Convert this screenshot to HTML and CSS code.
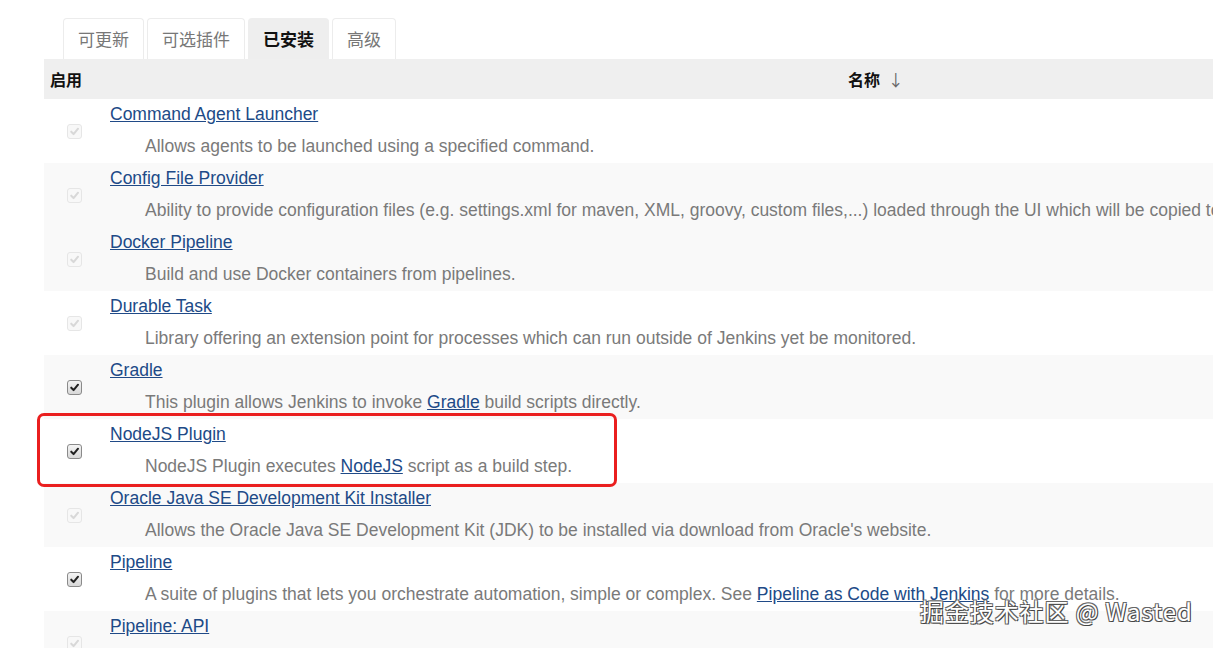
FILE: index.html
```html
<!DOCTYPE html>
<html lang="zh">
<head>
<meta charset="utf-8">
<title>插件管理</title>
<link rel="stylesheet" href="styles.css">
</head>
<body>
<div class="page">
  <div class="tabs">
    <div class="tab">可更新</div>
    <div class="tab">可选插件</div>
    <div class="tab active">已安装</div>
    <div class="tab">高级</div>
  </div>
  <div class="table">
    <div class="thead">
      <div class="th-enable">启用</div>
      <div class="th-name">名称 <span class="arrow">↓</span></div>
    </div>

    <div class="row">
      <div class="cb-cell"><span class="cb disabled"><svg viewBox="0 0 14 14"><path d="M3.5 7.2 L6 9.8 L10.8 4"/></svg></span></div>
      <div class="info">
        <a class="title" href="#">Command Agent Launcher</a>
        <div class="desc">Allows agents to be launched using a specified command.</div>
      </div>
    </div>

    <div class="row shade">
      <div class="cb-cell"><span class="cb disabled"><svg viewBox="0 0 14 14"><path d="M3.5 7.2 L6 9.8 L10.8 4"/></svg></span></div>
      <div class="info">
        <a class="title" href="#">Config File Provider</a>
        <div class="desc">Ability to provide configuration files (e.g. settings.xml for maven, XML, groovy, custom files,...) loaded through the UI which will be copied to the job workspace.</div>
      </div>
    </div>

    <div class="row shade">
      <div class="cb-cell"><span class="cb disabled"><svg viewBox="0 0 14 14"><path d="M3.5 7.2 L6 9.8 L10.8 4"/></svg></span></div>
      <div class="info">
        <a class="title" href="#">Docker Pipeline</a>
        <div class="desc">Build and use Docker containers from pipelines.</div>
      </div>
    </div>

    <div class="row">
      <div class="cb-cell"><span class="cb disabled"><svg viewBox="0 0 14 14"><path d="M3.5 7.2 L6 9.8 L10.8 4"/></svg></span></div>
      <div class="info">
        <a class="title" href="#">Durable Task</a>
        <div class="desc">Library offering an extension point for processes which can run outside of Jenkins yet be monitored.</div>
      </div>
    </div>

    <div class="row shade">
      <div class="cb-cell"><span class="cb"><svg viewBox="0 0 14 14"><path d="M3.5 7.2 L6 9.8 L10.8 4"/></svg></span></div>
      <div class="info">
        <a class="title" href="#">Gradle</a>
        <div class="desc">This plugin allows Jenkins to invoke <a href="#">Gradle</a> build scripts directly.</div>
      </div>
    </div>

    <div class="row">
      <div class="cb-cell"><span class="cb"><svg viewBox="0 0 14 14"><path d="M3.5 7.2 L6 9.8 L10.8 4"/></svg></span></div>
      <div class="info">
        <a class="title" href="#">NodeJS Plugin</a>
        <div class="desc">NodeJS Plugin executes <a href="#">NodeJS</a> script as a build step.</div>
      </div>
    </div>

    <div class="row shade">
      <div class="cb-cell"><span class="cb disabled"><svg viewBox="0 0 14 14"><path d="M3.5 7.2 L6 9.8 L10.8 4"/></svg></span></div>
      <div class="info">
        <a class="title" href="#">Oracle Java SE Development Kit Installer</a>
        <div class="desc">Allows the Oracle Java SE Development Kit (JDK) to be installed via download from Oracle's website.</div>
      </div>
    </div>

    <div class="row">
      <div class="cb-cell"><span class="cb"><svg viewBox="0 0 14 14"><path d="M3.5 7.2 L6 9.8 L10.8 4"/></svg></span></div>
      <div class="info">
        <a class="title" href="#">Pipeline</a>
        <div class="desc">A suite of plugins that lets you orchestrate automation, simple or complex. See <a href="#">Pipeline as Code with Jenkins</a> for more details.</div>
      </div>
    </div>

    <div class="row shade">
      <div class="cb-cell"><span class="cb disabled"><svg viewBox="0 0 14 14"><path d="M3.5 7.2 L6 9.8 L10.8 4"/></svg></span></div>
      <div class="info">
        <a class="title" href="#">Pipeline: API</a>
        <div class="desc">Plugin that defines Pipeline API.</div>
      </div>
    </div>
  </div>

  <div class="highlight"></div>
  <div class="watermark">掘金技术社区 @ Wasted</div>
</div>
</body>
</html>
```

FILE: styles.css
```css
* { box-sizing: border-box; }

html, body {
  margin: 0;
  padding: 0;
  background: #fff;
}

body {
  width: 1213px;
  height: 648px;
  overflow: hidden;
  font-family: "Liberation Sans", Arial, "Noto Sans CJK SC", sans-serif;
  font-size: 17.5px;
}

.page {
  position: relative;
  width: 1213px;
  height: 648px;
  padding: 18px 0 0 44px;
}

.tabs {
  display: flex;
  gap: 3px;
  margin-left: 19px;
  height: 41px;
}

.tab {
  padding: 0 14px;
  height: 41px;
  line-height: 40px;
  border: 1px solid #ececec;
  border-bottom: none;
  border-radius: 4px 4px 0 0;
  font-family: "Noto Sans CJK SC", sans-serif;
  font-size: 17px;
  color: #777;
  background: #fff;
}

.tab.active {
  background: #eeeeee;
  border-color: #eeeeee;
  color: #111;
  font-weight: bold;
}

.table {
  width: 1169px;
}

.thead {
  display: flex;
  align-items: center;
  height: 40px;
  background: #efefef;
  font-family: "Noto Sans CJK SC", sans-serif;
  font-size: 16px;
  font-weight: bold;
  color: #111;
}

.th-enable {
  width: 66px;
  padding-left: 6px;
}

.th-name {
  padding-left: 738px;
}

.th-name .arrow {
  font-weight: normal;
  color: #666;
  margin-left: 4px;
}

.row {
  display: flex;
  height: 64px;
  background: #fff;
}

.row.shade {
  background: #f9f9f9;
}

.cb-cell {
  width: 66px;
  display: flex;
  align-items: center;
  padding-left: 23px;
}

.cb {
  width: 15px;
  height: 15px;
  border: 1px solid #8a8a8a;
  border-radius: 3px;
  background: linear-gradient(#f4f4f4, #d8d8d8);
  display: flex;
  align-items: center;
  justify-content: center;
}

.cb svg {
  width: 13px;
  height: 13px;
}

.cb svg path {
  fill: none;
  stroke: #222;
  stroke-width: 2.2;
  stroke-linecap: round;
  stroke-linejoin: round;
}

.cb.disabled {
  border-color: #e6e6e6;
  background: #f8f8f8;
}

.cb.disabled svg path {
  stroke: #d8d8d8;
}

.info {
  flex: 1;
  padding-top: 5px;
  min-width: 0;
  white-space: nowrap;
  overflow: hidden;
}

.title {
  display: inline-block;
  line-height: 20px;
  color: #204a87;
  text-decoration: underline;
}

.desc {
  margin-top: 11px;
  line-height: 20px;
  padding-left: 35px;
  color: #7a7a7a;
}

.desc a {
  color: #204a87;
  text-decoration: underline;
}

.highlight {
  position: absolute;
  left: 37px;
  top: 413px;
  width: 580px;
  height: 74px;
  border: 3px solid #ea1f1f;
  border-radius: 7px;
  pointer-events: none;
}

.watermark {
  position: absolute;
  left: 920px;
  top: 595px;
  font-family: "Noto Sans CJK SC", sans-serif;
  font-size: 24px;
  line-height: 32px;
  color: #fff;
  letter-spacing: 0.9px;
  text-shadow:
    1px 1px 0 #444,
    -1px -1px 0 #666,
    1px -1px 0 #666,
    -1px 1px 0 #666;
}
```
